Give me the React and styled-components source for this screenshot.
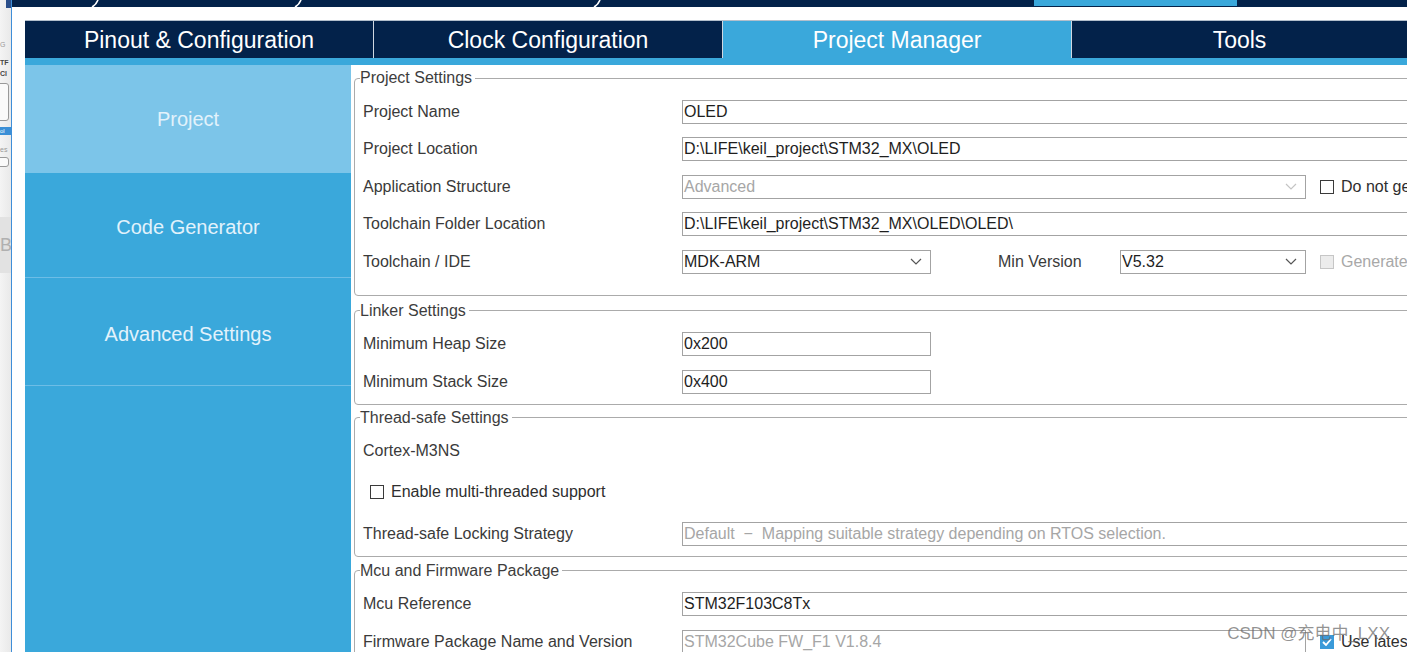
import React from "react";
import styled, { createGlobalStyle } from "styled-components";

const GlobalStyle = createGlobalStyle`
  html, body { margin: 0; padding: 0; background: #fff; }
  body { font-family: "Liberation Sans", Arial, sans-serif; overflow: hidden; }
`;

const NAVY = "#03224a";
const BLUE = "#3aa8db";
const LIGHT = "#7cc5e9";

const Screen = styled.div`
  position: relative;
  display: flex;
  width: 1407px;
  height: 652px;
  overflow: hidden;
  background: #fff;
`;

// sliver of the window behind
const BackWindow = styled.div`
  width: 11px;
  flex-shrink: 0;
  border-right: 1px solid #3f8ed8;
  background: linear-gradient(90deg, #f4f4f4, #e9e9e9);
  display: flex;
  flex-direction: column;
  overflow: hidden;
  font-size: 7px;
  color: #777;
  white-space: nowrap;
`;
const BackTop = styled.div`
  height: 10px;
  display: flex;
  justify-content: flex-end;
  span { width: 5px; height: 8px; background: #2b4f8a; }
`;
const BackText = styled.div`
  margin-top: ${(p) => p.$mt || 0}px;
  font-weight: ${(p) => (p.$bold ? "bold" : "normal")};
  color: ${(p) => (p.$bold ? "#444" : "#999")};
  line-height: 10px;
`;
const BackBox = styled.div`
  margin: ${(p) => p.$mt}px 2px 0 -4px;
  height: ${(p) => p.$h}px;
  border: 1px solid #999;
  border-radius: 3px;
  background: #fafafa;
`;
const BackSel = styled.div`
  margin-top: 6px;
  height: 8px;
  line-height: 8px;
  background: #3b8fd6;
  color: #fff;
  font-size: 6px;
`;
const BackBlock = styled.div`
  margin-top: 50px;
  height: 56px;
  background: #e2e2e2;
  color: #b0b0b0;
  font-size: 18px;
  line-height: 56px;
`;

const Main = styled.div`
  flex: 1;
  min-width: 0;
  display: flex;
  flex-direction: column;
`;

const Breadcrumb = styled.div`
  height: 7px;
  flex-shrink: 0;
  background: ${NAVY};
  display: flex;
`;
const Crumb = styled.div`
  flex: ${(p) => (p.$w ? `0 0 ${p.$w}px` : 1)};
  height: ${(p) => (p.$active ? 6 : 7)}px;
  background: ${(p) => (p.$active ? BLUE : "transparent")};
  display: flex;
  justify-content: flex-end;
`;

const Workspace = styled.div`
  flex: 1;
  min-height: 0;
  display: flex;
  flex-direction: column;
  padding: 13px 0 0 13px;
`;

const TabBar = styled.div`
  display: flex;
  height: 37px;
  border-top: 1px solid #b3bfcc;
  flex-shrink: 0;
`;
const Tab = styled.div`
  flex: ${(p) => (p.$last ? 1 : "0 0 349px")};
  box-sizing: border-box;
  border-right: ${(p) => (p.$last ? "none" : "1px solid #cfd7e0")};
  background: ${(p) => (p.$active ? BLUE : NAVY)};
  color: #fff;
  font-size: 23px;
  padding-top: 2px;
  display: flex;
  align-items: center;
  justify-content: center;
  white-space: nowrap;
`;
const Strip = styled.div`
  height: 7px;
  background: ${BLUE};
  flex-shrink: 0;
`;

const Body = styled.div`
  flex: 1;
  min-height: 0;
  display: flex;
`;
const Sidebar = styled.div`
  width: 326px;
  flex-shrink: 0;
  background: ${BLUE};
  display: flex;
  flex-direction: column;
`;
const SideItem = styled.div`
  box-sizing: border-box;
  height: ${(p) => p.$h}px;
  padding-top: ${(p) => p.$pt || 0}px;
  background: ${(p) => (p.$active ? LIGHT : BLUE)};
  border-bottom: ${(p) => (p.$active ? "none" : "1px solid #6dbde6")};
  color: #e2f2fb;
  font-size: 20px;
  display: flex;
  align-items: center;
  justify-content: center;
`;

const Content = styled.div`
  flex: 1;
  min-width: 0;
  overflow: hidden;
  background: #fff;
  display: flex;
  flex-direction: column;
  padding-top: 1px;
`;

const Group = styled.fieldset`
  margin: ${(p) => p.$mt}px -60px 0 3px;
  padding: 6px 0 ${(p) => p.$pb}px 8px;
  border: 1px solid #ababab;
  border-radius: 4px;
  min-width: 0;
  flex-shrink: 0;
`;
const Legend = styled.legend`
  margin-left: -3px;
  padding: 0 3px 0 0;
  font-size: 16px;
  line-height: 18px;
  color: #3d3d3d;
`;

const Row = styled.div`
  display: flex;
  align-items: center;
  height: ${(p) => p.$h || 37.5}px;
`;
const Label = styled.div`
  box-sizing: border-box;
  width: ${(p) => p.$w || 319}px;
  padding-left: ${(p) => p.$indent || 0}px;
  flex-shrink: 0;
  font-size: 16px;
  color: #3a3a3a;
  white-space: nowrap;
`;
const Field = styled.div`
  box-sizing: border-box;
  height: 24px;
  flex: ${(p) => (p.$w ? `0 0 ${p.$w}px` : 1)};
  border: 1px solid #a3a3a3;
  padding: 0 0 0 1px;
  font-size: 16px;
  color: ${(p) => (p.$disabled ? "#a6a6a6" : "#1e1e1e")};
  display: flex;
  align-items: center;
  justify-content: space-between;
  white-space: nowrap;
  overflow: hidden;
  svg { margin-right: 8px; flex-shrink: 0; }
`;
const Check = styled.div`
  display: flex;
  align-items: center;
  gap: 7px;
  margin-left: ${(p) => p.$ml || 0}px;
  font-size: 16px;
  color: ${(p) => (p.$disabled ? "#a8a8a8" : "#2e2e2e")};
  white-space: nowrap;
`;
const Box = styled.span`
  width: 14px;
  height: 14px;
  box-sizing: border-box;
  border: 1px solid ${(p) => (p.$checked ? "#3a9ad9" : p.$disabled ? "#c6c6c6" : "#3a3a3a")};
  background: ${(p) => (p.$checked ? "#3a9ad9" : p.$disabled ? "#ececec" : "#fff")};
  display: flex;
  align-items: center;
  justify-content: center;
`;

const Watermark = styled.div`
  position: absolute;
  right: 17px;
  bottom: 8px;
  font-family: "Liberation Sans", "Noto Sans CJK SC", sans-serif;
  font-size: 17px;
  color: rgba(105, 105, 105, 0.72);
  white-space: nowrap;
`;

const Chevron = ({ light }) => (
  <svg width="12" height="7" viewBox="0 0 12 7">
    <polyline points="1,1 6,6 11,1" fill="none" stroke={light ? "#c4c4c4" : "#555"} strokeWidth="1.2" />
  </svg>
);

const Slash = () => (
  <svg width="8" height="7" viewBox="0 0 8 7">
    <path d="M1 7 Q5 5 7 0" fill="none" stroke="#fff" strokeWidth="1.6" />
  </svg>
);

const CheckBox = ({ checked, disabled, children, ml }) => (
  <Check $disabled={disabled} $ml={ml}>
    <Box $checked={checked} $disabled={disabled}>
      {checked && (
        <svg width="10" height="8" viewBox="0 0 10 8">
          <polyline points="1,4 4,7 9,1" fill="none" stroke="#fff" strokeWidth="1.8" />
        </svg>
      )}
    </Box>
    {children}
  </Check>
);

const tabs = ["Pinout & Configuration", "Clock Configuration", "Project Manager", "Tools"];

export default function App() {
  return (
    <Screen>
      <GlobalStyle />
      <BackWindow>
        <BackTop><span /></BackTop>
        <BackText $mt={30}>G</BackText>
        <BackText $mt={8} $bold>TF</BackText>
        <BackText $mt={1} $bold>Cl</BackText>
        <BackBox $mt={4} $h={36} />
        <BackSel>ol</BackSel>
        <BackText $mt={10}>es</BackText>
        <BackBox $mt={2} $h={8} />
        <BackBlock>B</BackBlock>
      </BackWindow>
      <Main>
        <Breadcrumb>
          <Crumb $w={87}><Slash /></Crumb>
          <Crumb $w={203}><Slash /></Crumb>
          <Crumb $w={299}><Slash /></Crumb>
          <Crumb $w={433} />
          <Crumb $w={203} $active />
          <Crumb />
        </Breadcrumb>
        <Workspace>
          <TabBar>
            {tabs.map((t, i) => (
              <Tab key={t} $active={i === 2} $last={i === 3}>{t}</Tab>
            ))}
          </TabBar>
          <Strip />
          <Body>
            <Sidebar>
              <SideItem $h={108} $active>Project</SideItem>
              <SideItem $h={105} $pt={4}>Code Generator</SideItem>
              <SideItem $h={108} $pt={6}>Advanced Settings</SideItem>
            </Sidebar>
            <Content>
              <Group $mt={3} $pb={14}>
                <Legend>Project Settings</Legend>
                <Row>
                  <Label>Project Name</Label>
                  <Field>OLED</Field>
                </Row>
                <Row>
                  <Label>Project Location</Label>
                  <Field>D:\LIFE\keil_project\STM32_MX\OLED</Field>
                </Row>
                <Row>
                  <Label>Application Structure</Label>
                  <Field $w={624} $disabled>Advanced<Chevron light /></Field>
                  <CheckBox ml={14}>Do not generate the main()</CheckBox>
                </Row>
                <Row>
                  <Label>Toolchain Folder Location</Label>
                  <Field>D:\LIFE\keil_project\STM32_MX\OLED\OLED\</Field>
                </Row>
                <Row>
                  <Label>Toolchain / IDE</Label>
                  <Field $w={249}>MDK-ARM<Chevron /></Field>
                  <Label $w={189} $indent={67}>Min Version</Label>
                  <Field $w={186}>V5.32<Chevron /></Field>
                  <CheckBox ml={14} disabled>Generate Under Root</CheckBox>
                </Row>
              </Group>
              <Group $mt={6} $pb={3}>
                <Legend>Linker Settings</Legend>
                <Row>
                  <Label>Minimum Heap Size</Label>
                  <Field $w={249}>0x200</Field>
                </Row>
                <Row>
                  <Label>Minimum Stack Size</Label>
                  <Field $w={249}>0x400</Field>
                </Row>
              </Group>
              <Group $mt={4} $pb={3}>
                <Legend>Thread-safe Settings</Legend>
                <Row $h={36}>
                  <Label>Cortex-M3NS</Label>
                </Row>
                <Row $h={46}>
                  <CheckBox ml={7}>Enable multi-threaded support</CheckBox>
                </Row>
                <Row $h={38}>
                  <Label>Thread-safe Locking Strategy</Label>
                  <Field $disabled>
                    Default&nbsp;&nbsp;−&nbsp;&nbsp;Mapping suitable strategy depending on RTOS selection.
                  </Field>
                </Row>
              </Group>
              <Group $mt={5} $pb={3}>
                <Legend>Mcu and Firmware Package</Legend>
                <Row>
                  <Label>Mcu Reference</Label>
                  <Field>STM32F103C8Tx</Field>
                </Row>
                <Row>
                  <Label>Firmware Package Name and Version</Label>
                  <Field $w={624} $disabled>STM32Cube FW_F1 V1.8.4</Field>
                  <CheckBox ml={14} checked>Use latest available version</CheckBox>
                </Row>
              </Group>
            </Content>
          </Body>
        </Workspace>
      </Main>
      <Watermark>CSDN @充电中_LXX</Watermark>
    </Screen>
  );
}
